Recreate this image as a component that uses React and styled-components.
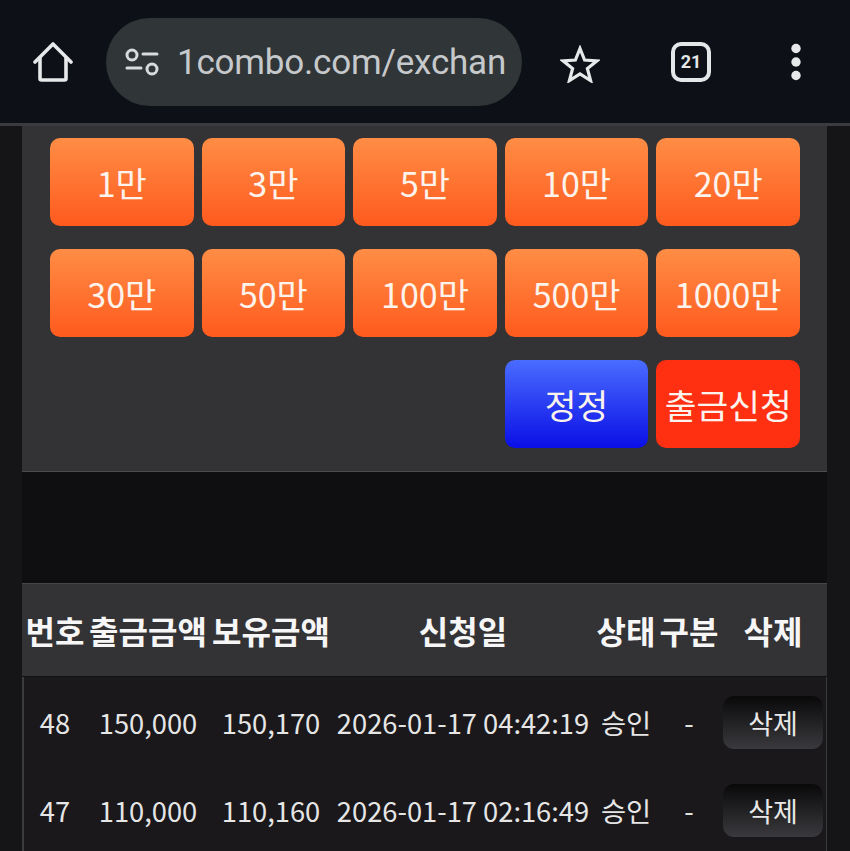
import React from "react";
import styled, { createGlobalStyle } from "styled-components";

const kr = `"Noto Sans CJK KR", "Noto Sans", sans-serif`;

const GlobalStyle = createGlobalStyle`
    html, body { margin: 0; padding: 0; background: #151416; }
    body { width: 850px; height: 851px; overflow: hidden; font-family: ${kr}; }
`;

const Page = styled.div`
    width: 850px;
    height: 851px;
    overflow: hidden;
    display: flex;
    flex-direction: column;
`;

const Toolbar = styled.div`
    height: 123px;
    flex: none;
    box-sizing: border-box;
    background: #0d1117;
    display: flex;
    align-items: center;
    padding: 0 0 0 33px;
    position: relative;
`;

const ToolbarLine = styled.div`
    height: 3px;
    flex: none;
    background: #393b3e;
`;

const IconSlot = styled.div`
    flex: none;
    display: flex;
    margin-left: ${(p) => p.$left}px;
    margin-top: ${(p) => p.$top || 0}px;
`;

const UrlBar = styled.div`
    flex: none;
    width: 416px;
    height: 88px;
    margin-left: 33px;
    box-sizing: border-box;
    border-radius: 44px;
    background: #303538;
    display: flex;
    align-items: center;
    padding-left: 19px;
    gap: 18px;
`;

const UrlText = styled.span`
    font-family: "Roboto", sans-serif;
    font-size: 35px;
    color: #c6c9cb;
    letter-spacing: -0.2px;
    white-space: nowrap;
    padding-top: 2px;
`;

const TabCount = styled.div`
    width: 40px;
    height: 40px;
    box-sizing: border-box;
    border: 4px solid #e4e6e8;
    border-radius: 10px;
    display: flex;
    align-items: center;
    justify-content: center;
    font-family: "Roboto", sans-serif;
    font-weight: 700;
    font-size: 18px;
    color: #e4e6e8;
`;

const Body = styled.div`
    flex: 1;
    padding: 0 23px 0 22px;
    display: flex;
    flex-direction: column;
`;

const Panel = styled.div`
    flex: none;
    height: 346px;
    box-sizing: border-box;
    background: #333234;
    border-bottom: 1px solid #4c4b4d;
    padding: 12px 27px 0 28px;
    display: grid;
    grid-template-columns: repeat(5, 1fr);
    grid-auto-rows: 88px;
    column-gap: 8px;
    row-gap: 23px;
`;

const Action = styled.button`
    border: 0;
    padding: 0;
    margin: 0;
    border-radius: 10px;
    font-family: ${kr};
    font-size: ${(p) => p.$size || 34}px;
    color: #fbf3ec;
    white-space: nowrap;
    background: ${(p) => p.$bg};
    grid-column: ${(p) => p.$col || "auto"};
`;

const orange = "linear-gradient(180deg, #ff8d45 0%, #ff5a1e 100%)";
const blue = "linear-gradient(180deg, #4a6cff 0%, #0a0fe6 100%)";
const red = "#ff2f12";

const Gap = styled.div`
    flex: none;
    height: 111px;
    background: #0f0e11;
`;

const Table = styled.div`
    flex: 1;
    background: #1a181b;
    border-left: 2px solid #3c3b3e;
    border-right: 1px solid #3c3b3e;
`;

const Row = styled.div`
    display: grid;
    grid-template-columns: 62px 124px 122px 262px 64px 62px 106px;
    align-items: center;
    justify-items: center;
    height: ${(p) => p.$height}px;
`;

const HeadRow = styled(Row)`
    background: #333235;
    border-top: 1px solid #454447;
    border-bottom: 1px solid #111;
    box-sizing: border-box;
    margin: 0 -1px 1px -2px;
    padding: 0 1px 0 2px;
`;

const HeadCell = styled.div`
    font-size: 32px;
    font-weight: 700;
    color: #f6f6f6;
    white-space: nowrap;
`;

const Cell = styled.div`
    font-size: 27.3px;
    color: #e6e6e6;
    white-space: nowrap;
`;

const DeleteBtn = styled.button`
    width: 100px;
    height: 53px;
    border: 0;
    padding: 0;
    border-radius: 11px;
    font-family: ${kr};
    font-size: 27px;
    color: #e8e8e8;
    background: linear-gradient(180deg, #09090a 0%, #3a3a3e 100%);
`;

const HomeIcon = () => (
    <svg width="40" height="40" viewBox="0 0 40 40" fill="none" stroke="#e6e8ea" strokeWidth="3.6" strokeLinejoin="round" strokeLinecap="round">
        <path d="M2 20 L20 2 L38 20" />
        <path d="M7 16 V36.5 Q7 38 8.5 38 H31.5 Q33 38 33 36.5 V16" />
    </svg>
);

const TuneIcon = () => (
    <svg width="34" height="28" viewBox="0 0 34 28" fill="none" stroke="#d8dbdd" strokeWidth="3" strokeLinecap="round">
        <circle cx="7" cy="7" r="5" />
        <path d="M18 6 H32" />
        <path d="M2 20 H16" />
        <circle cx="27" cy="21" r="5" />
    </svg>
);

const StarIcon = () => (
    <svg width="40" height="38" viewBox="0 0 40 38" fill="none" stroke="#e6e8ea" strokeWidth="3.2" strokeLinejoin="miter">
        <path d="M20 3.5 L24.6 15 L37 15.8 L27.4 23.6 L30.6 35.6 L20 29 L9.4 35.6 L12.6 23.6 L3 15.8 L15.4 15 Z" />
    </svg>
);

const MenuIcon = () => (
    <svg width="12" height="38" viewBox="0 0 12 38" fill="#e6e8ea">
        <circle cx="6" cy="5.5" r="4.7" />
        <circle cx="6" cy="19" r="4.7" />
        <circle cx="6" cy="32.5" r="4.7" />
    </svg>
);

const amounts = ["1만", "3만", "5만", "10만", "20만", "30만", "50만", "100만", "500만", "1000만"];
const heads = ["번호", "출금금액", "보유금액", "신청일", "상태", "구분", "삭제"];
const rows = [
    ["48", "150,000", "150,170", "2026-01-17 04:42:19", "승인", "-"],
    ["47", "110,000", "110,160", "2026-01-17 02:16:49", "승인", "-"],
];

export default function App() {
    return (
        <Page>
            <GlobalStyle />
            <Toolbar>
                <HomeIcon />
                <UrlBar>
                    <TuneIcon />
                    <UrlText>1combo.com/exchan</UrlText>
                </UrlBar>
                <IconSlot $left={38} $top={4}><StarIcon /></IconSlot>
                <IconSlot $left={71}><TabCount>21</TabCount></IconSlot>
                <IconSlot $left={79}><MenuIcon /></IconSlot>
            </Toolbar>
            <ToolbarLine />
            <Body>
                <Panel>
                    {amounts.map((a) => (
                        <Action key={a} $bg={orange}>{a}</Action>
                    ))}
                    <Action $bg={blue} $col="4" $size={34.5}>정정</Action>
                    <Action $bg={red} $size={34.5}>출금신청</Action>
                </Panel>
                <Gap />
                <Table>
                    <HeadRow $height={94}>
                        {heads.map((h) => (
                            <HeadCell key={h}>{h}</HeadCell>
                        ))}
                    </HeadRow>
                    {rows.map((r) => (
                        <Row key={r[0]} $height={88}>
                            {r.map((c, i) => (
                                <Cell key={i}>{c}</Cell>
                            ))}
                            <DeleteBtn>삭제</DeleteBtn>
                        </Row>
                    ))}
                </Table>
            </Body>
        </Page>
    );
}
